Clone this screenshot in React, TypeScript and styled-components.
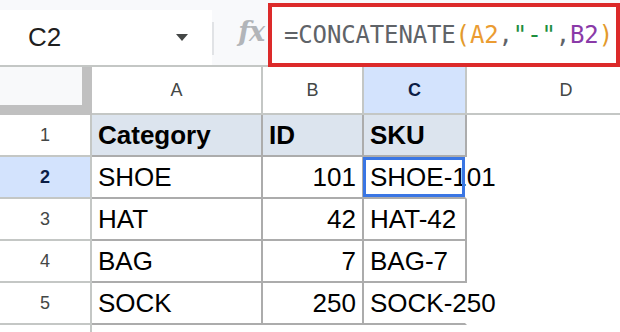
import React from "react";
import styled, { createGlobalStyle } from "styled-components";

const GlobalStyle = createGlobalStyle`
  html, body {
    margin: 0;
    padding: 0;
    background: #ffffff;
    overflow: hidden;
  }
`;

const Page = styled.div`
  width: 620px;
  height: 332px;
  overflow: hidden;
  display: flex;
  flex-direction: column;
  font-family: "Liberation Sans", Arial, sans-serif;
`;

const Toolbar = styled.div`
  display: flex;
  height: 67px;
  flex-shrink: 0;
  background: #f8f9fb;
  box-shadow: inset 0 -2px 0 #c4c7c5;
`;

const NameBox = styled.div`
  width: 212px;
  height: 55px;
  margin-top: 10px;
  box-sizing: border-box;
  padding-left: 28px;
  padding-right: 24px;
  display: flex;
  align-items: center;
  background: #ffffff;
  font-size: 26px;
  color: #1f1f1f;
`;

const Caret = styled.span`
  margin-left: auto;
  width: 0;
  height: 0;
  border-left: 6px solid transparent;
  border-right: 6px solid transparent;
  border-top: 7px solid #444746;
`;

const Divider = styled.div`
  width: 2px;
  height: 33px;
  margin-top: 22px;
  background: #e1e3e6;
`;

const FxArea = styled.div`
  width: 54px;
  box-sizing: border-box;
  display: flex;
  align-items: center;
  justify-content: flex-end;
  padding-right: 4px;
  padding-bottom: 4px;
  font-family: "DejaVu Serif", "Liberation Serif", serif;
  font-style: italic;
  font-weight: bold;
  font-size: 27px;
  color: #b2b5b9;
  letter-spacing: -1px;
`;

const FormulaBox = styled.div`
  flex: 1;
  align-self: flex-end;
  height: 64px;
  box-sizing: border-box;
  border: 4px solid #dc2a2a;
  background: #ffffff;
  display: flex;
  align-items: center;
  padding-left: 12px;
  font-family: "DejaVu Sans Mono", "Liberation Mono", monospace;
  font-size: 24px;
  letter-spacing: -0.15px;
  color: #5f6368;
  white-space: nowrap;
`;

const Token = styled.span<{ $color: string }>`
  color: ${({ $color }) => $color};
`;

const Grid = styled.div`
  flex: 1;
  display: grid;
  grid-template-columns: 92px 171px 101px 103px 200px;
  grid-template-rows: 48px repeat(5, 42px) 1fr;
`;

const Corner = styled.div`
  box-sizing: border-box;
  background: #f8f9fa;
  border-right: 10px solid #c0c0c0;
  border-bottom: 10px solid #c0c0c0;
`;

const ColHeader = styled.div<{ $active?: boolean }>`
  box-sizing: border-box;
  display: flex;
  align-items: center;
  justify-content: center;
  border-right: 2px solid #c4c7c5;
  border-bottom: 2px solid #c4c7c5;
  background: ${({ $active }) => ($active ? "#d3e3fd" : "#ffffff")};
  color: ${({ $active }) => ($active ? "#0b1d45" : "#444746")};
  font-weight: ${({ $active }) => ($active ? "bold" : "normal")};
  font-size: 18px;
`;

const RowHeader = styled.div<{ $active?: boolean; $last?: boolean }>`
  box-sizing: border-box;
  display: flex;
  align-items: center;
  justify-content: center;
  border-right: 2px solid #c4c7c5;
  border-bottom: ${({ $last }) => ($last ? "none" : "2px solid #c4c7c5")};
  background: ${({ $active }) => ($active ? "#d3e3fd" : "#ffffff")};
  color: ${({ $active }) => ($active ? "#0b1d45" : "#444746")};
  font-weight: ${({ $active }) => ($active ? "bold" : "normal")};
  font-size: 18px;
`;

const Cell = styled.div<{
  $head?: boolean;
  $right?: boolean;
  $plain?: boolean;
  $spill?: boolean;
}>`
  position: relative;
  box-sizing: border-box;
  display: flex;
  align-items: center;
  justify-content: ${({ $right }) => ($right ? "flex-end" : "flex-start")};
  padding: 0 6px;
  border-right: 2px solid
    ${({ $plain, $spill }) => ($plain || $spill ? "transparent" : "#acacac")};
  border-bottom: 2px solid ${({ $plain }) => ($plain ? "transparent" : "#acacac")};
  background: ${({ $head }) => ($head ? "#dce4ee" : "transparent")};
  font-size: 26px;
  font-weight: ${({ $head }) => ($head ? "bold" : "normal")};
  color: #000000;
  white-space: nowrap;
  overflow: visible;
`;

const Selection = styled.div`
  position: absolute;
  top: 0;
  left: -1px;
  right: 0;
  bottom: 0;
  border: 3px solid #3a76e4;
  pointer-events: none;
`;

type Row = { n: number; a: string; b: string; c: string; head?: boolean };

const rows: Row[] = [
  { n: 1, a: "Category", b: "ID", c: "SKU", head: true },
  { n: 2, a: "SHOE", b: "101", c: "SHOE-101" },
  { n: 3, a: "HAT", b: "42", c: "HAT-42" },
  { n: 4, a: "BAG", b: "7", c: "BAG-7" },
  { n: 5, a: "SOCK", b: "250", c: "SOCK-250" },
];

const columns = ["A", "B", "C", "D"];

// text longer than column C spills into the empty D cell
const spills = (text: string) => text.length > 6;

const App = () => {
  return (
    <>
      <GlobalStyle />
      <Page>
        <Toolbar>
          <NameBox>
            C2
            <Caret />
          </NameBox>
          <Divider />
          <FxArea>fx</FxArea>
          <FormulaBox>
            =CONCATENATE<Token $color="#e39a2c">(</Token>
            <Token $color="#eb9c32">A2</Token>,
            <Token $color="#1e8e3e">"-"</Token>,
            <Token $color="#8a3aa8">B2</Token>
            <Token $color="#e39a2c">)</Token>
          </FormulaBox>
        </Toolbar>
        <Grid>
          <Corner />
          {columns.map((col) => (
            <ColHeader key={col} $active={col === "C"}>
              {col}
            </ColHeader>
          ))}
          {rows.map((row) => (
            <React.Fragment key={row.n}>
              <RowHeader $active={row.n === 2}>{row.n}</RowHeader>
              <Cell $head={row.head}>{row.a}</Cell>
              <Cell $head={row.head} $right={!row.head}>
                {row.b}
              </Cell>
              <Cell $head={row.head} $spill={spills(row.c)}>
                {row.c}
                {row.n === 2 && <Selection />}
              </Cell>
              <Cell $plain />
            </React.Fragment>
          ))}
          <RowHeader $last />
        </Grid>
      </Page>
    </>
  );
};

export default App;
